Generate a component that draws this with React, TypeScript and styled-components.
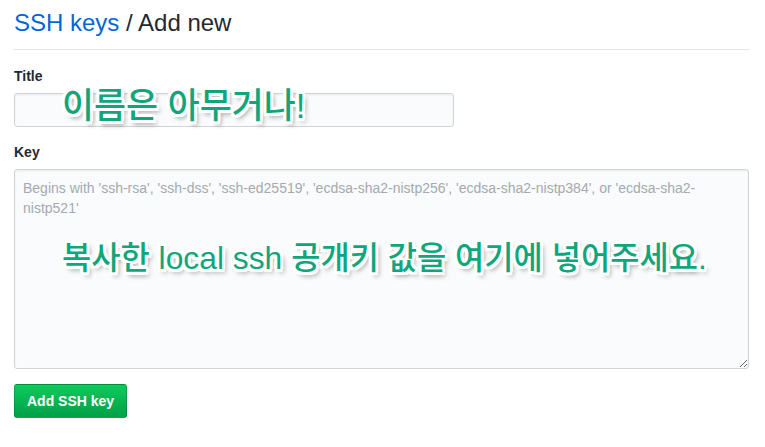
import React from "react";
import styled, { createGlobalStyle } from "styled-components";

const Global = createGlobalStyle`
  html, body { margin: 0; padding: 0; background: #fff; }
  body {
    font-family: "Liberation Sans", Arial, sans-serif;
    font-size: 14px;
    line-height: 1.5;
    color: #24292e;
  }
`;

const Page = styled.div`
  position: relative;
  width: 735px;
  padding: 5px 0 0 14px;
`;

const Subhead = styled.div`
  padding-bottom: 8px;
  border-bottom: 1px solid #e1e4e8;
  margin-bottom: 16px;
`;

const Heading = styled.h2`
  margin: 0;
  font-size: 24px;
  line-height: 36px;
  font-weight: 400;
  color: #24292e;
`;

const Crumb = styled.a`
  color: #0366d6;
  text-decoration: none;
`;

const Form = styled.form`
  display: flex;
  flex-direction: column;
`;

const Group = styled.div<{ $gap?: number }>`
  display: flex;
  flex-direction: column;
  margin-bottom: ${(p) => p.$gap ?? 15}px;
`;

const Label = styled.label`
  font-weight: 700;
  font-size: 14px;
  line-height: 20px;
  margin-bottom: 7px;
`;

const fieldBase = `
  box-sizing: border-box;
  font-family: "Liberation Sans", Arial, sans-serif;
  font-size: 14px;
  line-height: 20px;
  color: #24292e;
  background: #fafbfc;
  border: 1px solid #d1d5da;
  border-radius: 3px;
  box-shadow: inset 0 1px 2px rgba(27, 31, 35, 0.075);
  outline: none;
  &::placeholder { color: #a3aab1; }
`;

const TitleInput = styled.input`
  ${fieldBase}
  width: 440px;
  height: 34px;
  padding: 6px 8px;
`;

const KeyArea = styled.textarea`
  ${fieldBase}
  width: 735px;
  height: 200px;
  padding: 8px;
  resize: vertical;
`;

const SubmitButton = styled.button`
  align-self: flex-start;
  box-sizing: border-box;
  height: 34px;
  padding: 6px 12px;
  font-family: "Liberation Sans", Arial, sans-serif;
  font-size: 14px;
  font-weight: 700;
  line-height: 20px;
  color: #fff;
  background-image: linear-gradient(-180deg, #10ca5c 0%, #02a449 90%);
  border: 1px solid rgba(27, 31, 35, 0.2);
  border-radius: 3px;
  cursor: pointer;
`;

const Note = styled.div<{ $top: number; $size: number }>`
  position: absolute;
  left: 62px;
  top: ${(p) => p.$top}px;
  font-family: "Liberation Sans", "Noto Sans CJK KR", sans-serif;
  font-size: ${(p) => p.$size}px;
  font-weight: 500;
  line-height: 1;
  white-space: nowrap;
  color: #10a67c;
  pointer-events: none;
  text-shadow:
    -2.5px -2.5px 0 #fff, 2.5px -2.5px 0 #fff, -2.5px 2.5px 0 #fff, 2.5px 2.5px 0 #fff,
    0 -3px 0 #fff, 0 3px 0 #fff, -3px 0 0 #fff, 3px 0 0 #fff,
    3px 4px 5px rgba(0, 0, 0, 0.45);
`;

export default function App() {
  return (
    <>
      <Global />
      <Page>
        <Subhead>
          <Heading>
            <Crumb href="#">SSH keys</Crumb> / Add new
          </Heading>
        </Subhead>
        <Form onSubmit={(e) => e.preventDefault()}>
          <Group $gap={15}>
            <Label htmlFor="title">Title</Label>
            <TitleInput id="title" type="text" />
          </Group>
          <Group $gap={15}>
            <Label htmlFor="key">Key</Label>
            <KeyArea
              id="key"
              placeholder="Begins with 'ssh-rsa', 'ssh-dss', 'ssh-ed25519', 'ecdsa-sha2-nistp256', 'ecdsa-sha2-nistp384', or 'ecdsa-sha2-nistp521'"
            />
          </Group>
          <SubmitButton type="submit">Add SSH key</SubmitButton>
        </Form>
        <Note $top={89} $size={34.8}>이름은 아무거나!</Note>
        <Note $top={243} $size={31.8}>복사한 local ssh 공개키 값을 여기에 넣어주세요.</Note>
      </Page>
    </>
  );
}
